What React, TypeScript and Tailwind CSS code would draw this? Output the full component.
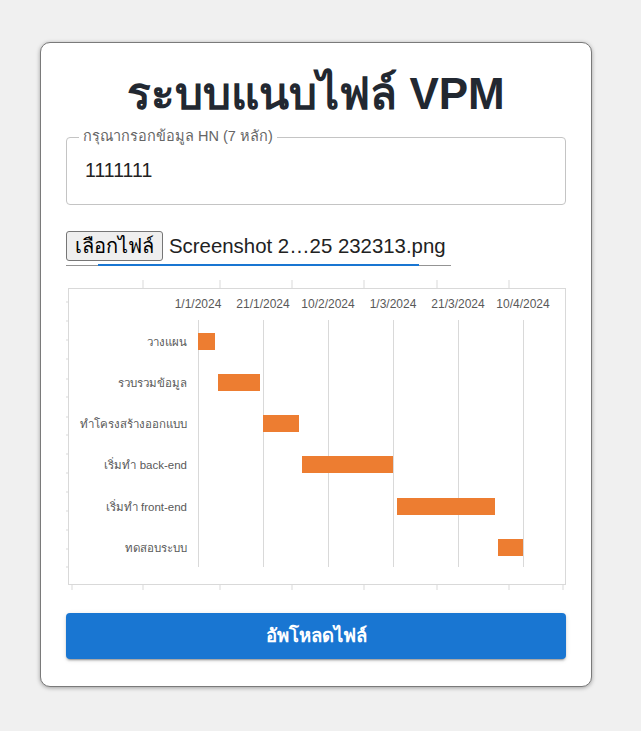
import React from "react";

const DATES = [
  { x: 132, label: "1/1/2024" },
  { x: 197, label: "21/1/2024" },
  { x: 262, label: "10/2/2024" },
  { x: 327, label: "1/3/2024" },
  { x: 392, label: "21/3/2024" },
  { x: 457, label: "10/4/2024" },
];

const TASKS = [
  { name: "วางแผน", y: 62, x1: 132, x2: 149 },
  { name: "รวบรวมข้อมูล", y: 103, x1: 152, x2: 194 },
  { name: "ทำโครงสร้างออกแบบ", y: 144, x1: 197, x2: 233 },
  { name: "เริ่มทำ back-end", y: 185, x1: 236, x2: 327 },
  { name: "เริ่มทำ front-end", y: 227, x1: 331, x2: 429 },
  { name: "ทดสอบระบบ", y: 268, x1: 432, x2: 457 },
];

const TOP_TICKS = [77, 154, 226, 298, 371, 443];
const BOTTOM_TICKS = [6, 77, 154, 226, 298, 371, 443, 497];
const LEFT_TICKS = [22, 41, 60, 79, 99, 117, 137, 155, 174, 193, 212, 231, 250, 269, 287];

function GanttChart() {
  return (
    <svg width="500" height="310" viewBox="0 0 500 310" className="block" style={{ fontFamily: '"Liberation Sans", Arial, sans-serif' }}>
      <rect x="0" y="0" width="500" height="310" fill="#ffffff" />
      {TOP_TICKS.map((x) => (
        <line key={"t" + x} x1={x} y1={0} x2={x} y2={8} stroke="#d9d9d9" />
      ))}
      {BOTTOM_TICKS.map((x) => (
        <line key={"b" + x} x1={x} y1={304} x2={x} y2={310} stroke="#d9d9d9" />
      ))}
      {LEFT_TICKS.map((y) => (
        <line key={"l" + y} x1={0} y1={y} x2={3} y2={y} stroke="#d9d9d9" />
      ))}
      <rect x="2.5" y="8.5" width="497" height="296" fill="none" stroke="#d9d9d9" />
      {DATES.map((d) => (
        <g key={d.label}>
          <line x1={d.x + 0.5} y1={40} x2={d.x + 0.5} y2={287} stroke="#d9d9d9" />
          <text x={d.x} y={28} fontSize="12" fill="#595959" textAnchor="middle">
            {d.label}
          </text>
        </g>
      ))}
      {TASKS.map((t) => (
        <g key={t.name}>
          <text x={121} y={t.y + 4} fontSize="11.5" fill="#595959" textAnchor="end">
            {t.name}
          </text>
          <rect x={t.x1} y={t.y - 9} width={t.x2 - t.x1} height={17} fill="#ed7d31" />
        </g>
      ))}
    </svg>
  );
}

export default function App() {
  return (
    <div className="min-h-screen bg-[#f0f0f0] pt-[42px] pl-[40px]" style={{ fontFamily: '"Liberation Sans", Arial, sans-serif' }}>
      <div className="w-[552px] bg-white border border-[#7a7a7a] rounded-[10px] shadow-[0_1px_4px_rgba(0,0,0,0.35)] px-[25px] pt-[27px] pb-[27px] flex flex-col">
        <h1 className="text-center text-[44px] leading-[48px] font-bold text-[#222831] h-[48px]">ระบบแนบไฟล์ VPM</h1>

        <div className="relative mt-[19px] h-[68px] border border-[#c4c4c4] rounded-[4px] flex items-center px-[18px]">
          <span className="absolute -top-[10px] left-[12px] bg-white px-[4px] text-[14.5px] leading-[16px] text-[#666666]">
            กรุณากรอกข้อมูล HN (7 หลัก)
          </span>
          <span className="text-[19.5px] text-[#222222]">1111111</span>
        </div>

        <div className="mt-[26px] relative w-[385px] flex items-center border-b border-[#949494] pb-[3px]">
          <button className="h-[30px] px-[8px] text-[20px] leading-none bg-[#efefef] border border-[#767676] rounded-[3px] text-black">
            เลือกไฟล์
          </button>
          <span className="ml-[6px] text-[20.4px] text-[#222222] whitespace-nowrap">Screenshot 2…25 232313.png</span>
          <span className="absolute left-[32px] -bottom-[1px] w-[321px] h-[2px] bg-[#1976d2]" />
        </div>

        <div className="mt-[14px]">
          <GanttChart />
        </div>

        <button className="mt-[23px] h-[46px] w-full rounded-[4px] bg-[#1976d2] text-white text-[18.5px] font-bold shadow-[0_3px_1px_-2px_rgba(0,0,0,0.2),0_2px_2px_0_rgba(0,0,0,0.14),0_1px_5px_0_rgba(0,0,0,0.12)]">
          อัพโหลดไฟล์
        </button>
      </div>
    </div>
  );
}
